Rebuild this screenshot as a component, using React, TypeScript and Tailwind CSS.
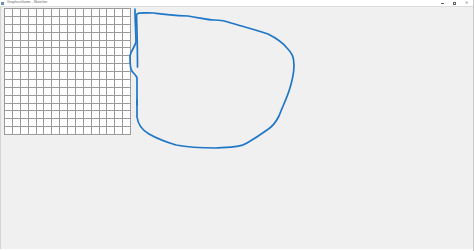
import React from 'react';

const cells = Array.from({ length: 256 });

export default function App() {
  return (
    <div className="w-[474px] h-[251px] flex flex-col bg-[#f0f0f0] border-r border-[#c8c8c8] overflow-hidden" style={{ fontFamily: '"Liberation Sans", Arial, sans-serif' }}>
      <div className="h-[7px] bg-white flex items-center border-b border-[#dcdcdc]">
        <span className="w-[3px] h-[3px] ml-[1px] bg-[#6a8fb8]" />
        <span className="ml-[3px] text-[3.5px] leading-none text-[#666]">GraphicsGame - Sketcher</span>
        <div className="ml-auto flex items-center gap-[9px] pr-[5px]">
          <span className="w-[3px] h-px bg-[#666]" />
          <span className="w-[3px] h-[3px] border border-[#666]" />
          <span className="text-[4px] leading-none text-[#666]">✕</span>
        </div>
      </div>
      <div className="relative flex-1 pl-[3px] pt-[1px] border-l border-[#d4d4d4]">
        <div className="grid grid-cols-16 w-[127px] h-[127px] border-l border-t border-[#9a9a9a] bg-white">
          {cells.map((_, i) => (
            <div key={i} className="border-r border-b border-[#9a9a9a]" />
          ))}
        </div>
        <svg className="absolute left-0 top-[-7px] pointer-events-none" width="474" height="251" viewBox="0 0 474 251" fill="none">
          <path
            d="M134 10 C134 20 135 34 135 42 C134 47 130 50 129 56 C129 62 129 66 130 69 C131 73 135 74 136 78 C136 88 136 95 136 105"
            stroke="#1f76c6" strokeWidth="1.7" strokeLinecap="round" strokeLinejoin="round"
          />
          <path
            d="M136.5 67 C136.5 55 136 30 135.5 15 C136 12 142 13 153 13 C160 14 165 15 187 16 C200 18 206 20 213 20 C220 20 225 21 230 23 C240 26 255 30 267 34 C275 38 282 43 286 48 C291 53 293 57 293 65 C293 75 290 85 288 91 C285 100 281 108 278 116 C275 122 271 127 266 130 C259 135 253 139 246 143 C240 147 232 147 215 148 C200 148 185 147 175 145 C165 142 155 138 148 134 C141 130 137 125 136 117 C136 110 136 106 136 100"
            stroke="#1f76c6" strokeWidth="1.7" strokeLinecap="round" strokeLinejoin="round"
          />
          <circle cx="134" cy="9" r="0.8" fill="#1f76c6" />
        </svg>
      </div>
      <div className="h-[2px] bg-white" />
    </div>
  );
}
